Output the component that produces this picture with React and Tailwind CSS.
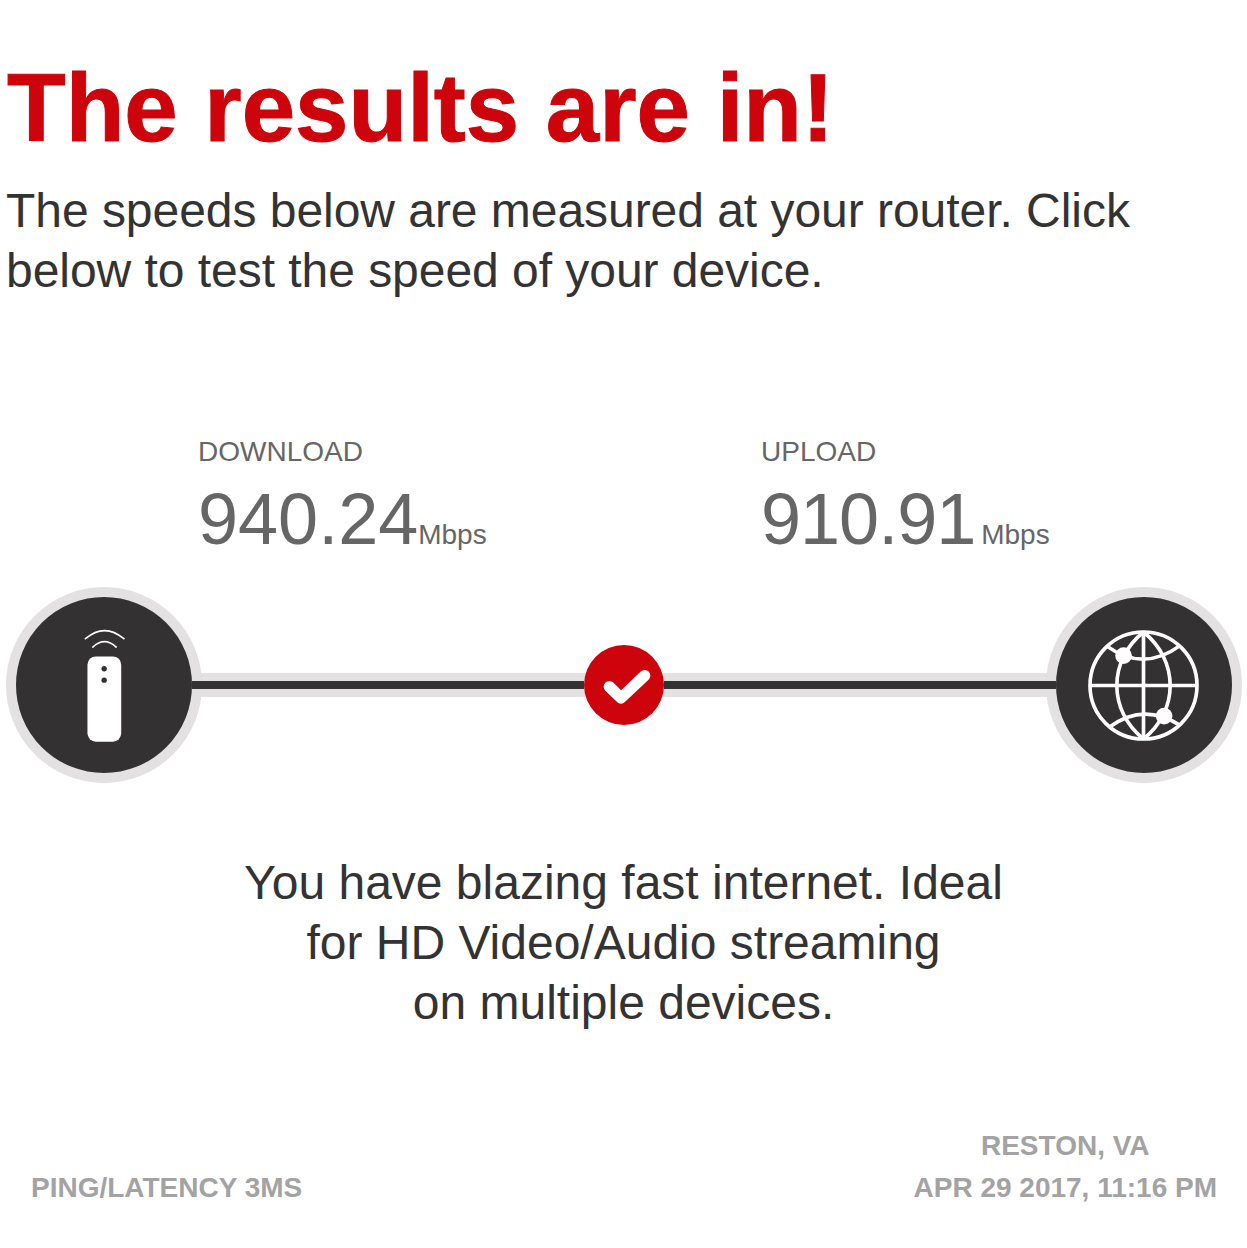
const RemoteIcon = () => (
  <svg viewBox="242 170 140 350" className="w-[47px] h-[117px]" fill="none">
    <path d="M255 205 Q312 156 370 205" stroke="#fff" strokeWidth="5" strokeLinecap="round" />
    <path d="M277 230 Q312 198 347 230" stroke="#fff" strokeWidth="5" strokeLinecap="round" />
    <rect x="261" y="258" width="101" height="255" rx="25" fill="#fff" />
    <circle cx="311" cy="295" r="8" fill="#333132" />
    <circle cx="311" cy="329" r="8" fill="#333132" />
  </svg>
)

const GlobeIcon = () => (
  <svg viewBox="203 175 340 340" className="w-[113px] h-[113px]" fill="none" stroke="#fff" strokeWidth="11">
    <circle cx="370" cy="345" r="161" />
    <path d="M370 184 C263 270 263 420 370 506" />
    <path d="M370 184 C477 270 477 420 370 506" />
    <path d="M370 184 V506 M209 345 H531" />
    <path d="M262 228 Q370 305 480 225" />
    <path d="M268 470 Q370 395 480 465" />
    <circle cx="310" cy="255" r="25" fill="#fff" stroke="none" />
    <circle cx="432" cy="437" r="25" fill="#fff" stroke="none" />
  </svg>
)

const CheckIcon = () => (
  <svg viewBox="0 0 240 240" className="w-20 h-20" fill="none">
    <path d="M76 125 L111 159 L182 92" stroke="#fff" strokeWidth="34" strokeLinecap="round" strokeLinejoin="round" />
  </svg>
)

const Stat = ({ label, value, className, valueClassName, unitClassName }) => (
  <div className={className}>
    <div className="text-[28px] leading-[32px] text-[#666666]">{label}</div>
    <div className="flex items-baseline text-[#666666] mt-[11px]">
      <span className={`text-[72px] leading-[80px] ${valueClassName}`}>{value}</span>
      <span className={`text-[28px] leading-[32px] ${unitClassName}`}>Mbps</span>
    </div>
  </div>
)

export default function App() {
  return (
    <div className="w-[1247px] h-[1248px] bg-white overflow-hidden font-['Liberation_Sans',sans-serif]">
      <div className="pl-[7px] pt-[56px]">
        <h1 className="text-[96px] leading-[104px] font-bold text-[#cd040b] [-webkit-text-stroke:1px_#cd040b]">The results are in!</h1>
        <p className="text-[48px] leading-[60px] text-[#333333] mt-[21px] -ml-px tracking-[-0.04px]">
          The speeds below are measured at your router. Click
          <br />
          below to test the speed of your device.
        </p>
      </div>

      <div className="flex pl-[198px] mt-[135px]">
        <Stat label="DOWNLOAD" value="940.24" className="w-[563px]" valueClassName="" unitClassName="" />
        <Stat label="UPLOAD" value="910.91" valueClassName="tracking-[-1px]" unitClassName="ml-[6px]" />
      </div>

      <div className="flex items-center pl-[6px] pr-[5px] mt-[28px]">
        <div className="w-[196px] h-[196px] shrink-0 rounded-full bg-[#333132] border-[10px] border-[#e3e1e1] flex items-center justify-center">
          <RemoteIcon />
        </div>
        <div className="relative z-10 flex-1 h-6 -mx-[10px] bg-[#e3e1e1] flex items-center">
          <div className="flex-1 h-2 bg-[#333132]"></div>
          <div className="w-20 h-20 shrink-0 rounded-full bg-[#cd040b]">
            <CheckIcon />
          </div>
          <div className="flex-1 h-2 bg-[#333132]"></div>
        </div>
        <div className="w-[196px] h-[196px] shrink-0 rounded-full bg-[#333132] border-[10px] border-[#e3e1e1] flex items-center justify-center">
          <GlobeIcon />
        </div>
      </div>

      <p className="text-[48px] leading-[60px] text-[#333333] text-center mt-[70px]">
        You have blazing fast internet. Ideal
        <br />
        for HD Video/Audio streaming
        <br />
        on multiple devices.
      </p>

      <div className="flex items-end justify-between pl-[31px] pr-[30px] mt-[92px] text-[28px] leading-[42px] font-bold text-[#a3a3a3]">
        <div>PING/LATENCY 3MS</div>
        <div className="text-center">
          <div>RESTON, VA</div>
          <div>APR 29 2017, 11:16 PM</div>
        </div>
      </div>
    </div>
  )
}
